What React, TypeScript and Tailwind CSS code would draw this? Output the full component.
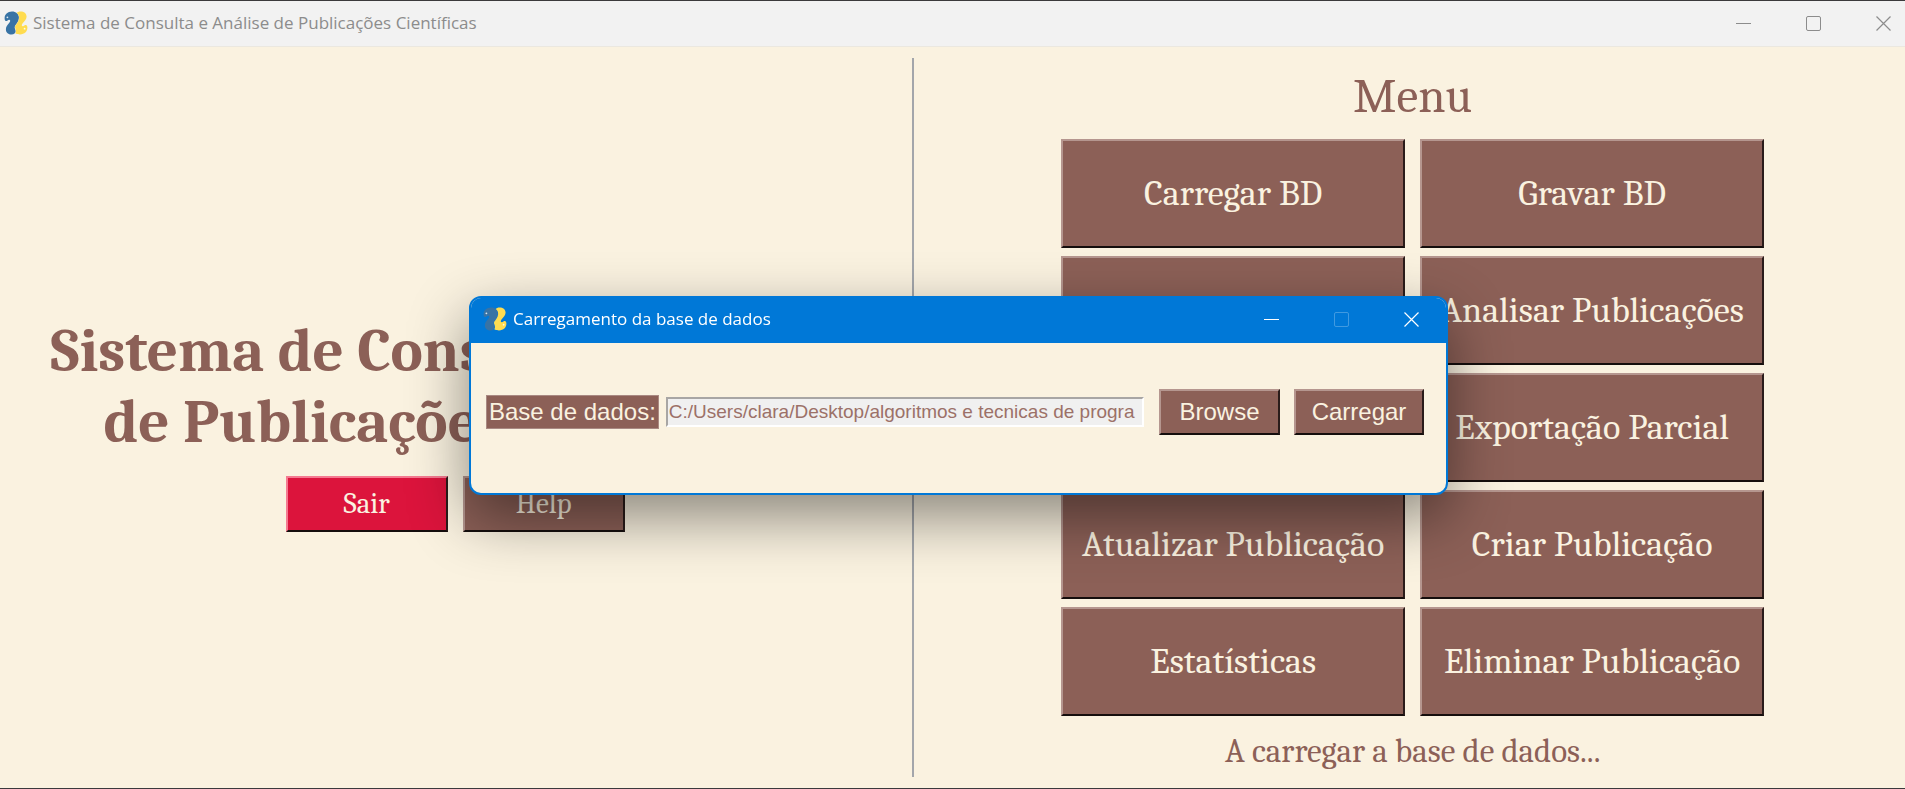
import type { ReactNode } from "react";

const serif = "font-['Cambria','Caladea','Liberation_Serif',serif]";
const bevel =
  "border-2 border-t-[#b5968f] border-l-[#b5968f] border-r-[#2a1c1a] border-b-[#150e0d] text-[#faf2e0]";

function SnakeIcon() {
  return (
    <svg className="size-6 shrink-0" viewBox="0 0 24 24" fill="none" aria-hidden="true">
      <path
        d="M8 .6C3.500.6.6 3.600.6 7.200.6 9.500 1.500 10.300 2.700 9.900 3.800 9.500 4.200 8.400 5.400 8.700 6.600 9 6.400 10.400 5.300 11.700 3.200 14 1.900 15.700 1.900 18.400 1.900 21.600 4.600 23.500 7.400 23.500 10.200 23.500 11.600 22.200 11.600 20.300 11.600 18 9.800 17 11.300 14.500 12.500 12.400 14.900 10.500 14.900 6.800 14.900 3 12 .6 8 .6Z"
        fill="#3873a5"
      />
      <path
        d="M16 23.400C20.500 23.400 23.400 20.400 23.400 16.800 23.400 14.500 22.500 13.700 21.300 14.100 20.200 14.500 19.800 15.600 18.600 15.300 17.400 15 17.600 13.600 18.700 12.300 20.800 10 22.600 8.300 22.600 5.600 22.600 2.400 19.800.5 16.800.5 14.600.5 13.400 1.200 12.700 2 14.400 3.300 15.400 5.200 15.100 7.400 14.700 10.500 12.600 12.500 11.400 14.600 10.200 16.800 12.300 18 12 20.500 11.900 21.200 11.600 21.800 11.300 22.200 12.600 23 14.300 23.400 16 23.400Z"
        fill="#ffdc50"
      />
      <circle cx="3.400" cy="6.300" r="0.900" fill="#dbe7f0" />
      <circle cx="20.600" cy="17.700" r="0.900" fill="#fffbe6" />
    </svg>
  );
}

function WindowControls({ disabledMax = false }: { disabledMax?: boolean }) {
  return (
    <div className="flex items-center gap-[54px]">
      <button aria-label="Minimizar">
        <svg className="size-4" viewBox="0 0 16 16" fill="none" stroke="currentColor">
          <path d="M0 8.500H15" />
        </svg>
      </button>
      <button aria-label="Maximizar" disabled={disabledMax} className="disabled:opacity-25">
        <svg className="size-4" viewBox="0 0 16 16" fill="none" stroke="currentColor">
          <rect x=".5" y="1.500" width="14" height="14" rx="1.500" />
        </svg>
      </button>
      <button aria-label="Fechar">
        <svg className="size-4" viewBox="0 0 16 16" fill="none" stroke="currentColor" strokeWidth="1.200">
          <path d="M.5 1.500l14 14M14.500 1.500l-14 14" />
        </svg>
      </button>
    </div>
  );
}

function BevelButton({ className, children }: { className: string; children: ReactNode }) {
  return <button className={`${bevel} ${className}`}>{children}</button>;
}

const menuItems = [
  "Carregar BD",
  "Gravar BD",
  "Consultar Publicação",
  "Analisar Publicações",
  "Exportação Total",
  "Exportação Parcial",
  "Atualizar Publicação",
  "Criar Publicação",
  "Estatísticas",
  "Eliminar Publicação",
];

export default function App() {
  return (
    <div className={`flex min-h-screen flex-col border-y border-[#3b3a3c] bg-[#faf2e0] text-[#8c6057] ${serif}`}>
      <header className="flex h-[46px] items-center justify-between border-b border-[#ebe8e0] bg-[#f2f2f2] pr-[13px] pb-0.5 pl-1 font-['Open_Sans','Noto_Sans',sans-serif] text-[17px] text-[#8c8c8c]">
        <div className="flex items-center gap-[5px]">
          <SnakeIcon />
          <span>Sistema de Consulta e Análise de Publicações Científicas</span>
        </div>
        <WindowControls />
      </header>

      <main className="flex grow py-[11px]">
        <section className="flex w-[48%] flex-col items-center justify-center gap-[18px] border-r-2 border-[#a3a6ab] pt-3 pr-0.5">
          <h1 className="text-center text-[61px] leading-[71px] font-bold whitespace-nowrap">
            Sistema de Consulta e Análise
            <br />
            de Publicações Científicas
          </h1>
          <div className="flex gap-[15px]">
            <BevelButton className="h-14 w-[162px] border-t-[#f47a90] border-l-[#f47a90] bg-[#dc143c] text-[29px] leading-8">
              Sair
            </BevelButton>
            <BevelButton className="h-14 w-[162px] bg-[#8c6057] text-[29px] leading-8">Help</BevelButton>
          </div>
        </section>

        <section className="flex grow flex-col items-center pl-1.5">
          <h2 className="pt-1.5 pb-[11px] text-[49px] leading-[64px]">Menu</h2>
          <div className="grid grid-cols-[344px_344px] gap-x-[15px] gap-y-2">
            {menuItems.map((item) => (
              <BevelButton key={item} className="h-[109px] bg-[#8c6057] text-[36px] leading-10 whitespace-nowrap">
                {item}
              </BevelButton>
            ))}
          </div>
          <p className="pt-[15px] text-[33px] leading-10">A carregar a base de dados...</p>
        </section>
      </main>

      <div className="fixed inset-0 flex items-center justify-center pt-0.5 pl-3">
        <div
          role="dialog"
          aria-label="Carregamento da base de dados"
          className="w-[979px] overflow-hidden rounded-xl border-2 border-[#0078d7] bg-[#faf2e0] font-['Liberation_Sans',Arial,sans-serif] shadow-[0_22px_60px_rgba(0,0,0,0.45)]"
        >
          <div className="flex h-[45px] items-center justify-between bg-[#0078d7] pr-[26px] pb-[3px] pl-3 font-['Open_Sans','Noto_Sans',sans-serif] text-[17px] text-white">
            <div className="flex items-center gap-1.5">
              <SnakeIcon />
              <span>Carregamento da base de dados</span>
            </div>
            <WindowControls disabledMax />
          </div>
          <form className="flex h-[150px] items-center pr-[22px] pb-3 pl-[15px]" onSubmit={(e) => e.preventDefault()}>
            <label
              htmlFor="path"
              className="border border-[#a98982] bg-[#8c6057] px-0.5 text-2xl leading-8 whitespace-nowrap text-[#faf2e0]"
            >
              Base de dados:
            </label>
            <input
              id="path"
              type="text"
              defaultValue="C:/Users/clara/Desktop/algoritmos e tecnicas de progra"
              className="ml-[7px] h-[30px] min-w-0 grow border-2 border-t-[#a8a6a4] border-r-white border-b-white border-l-[#a8a6a4] bg-[#f0f0f0] pl-px text-[19px] text-[#9c7168] outline-none"
            />
            <BevelButton className="ml-[15px] h-[46px] w-[121px] bg-[#8c6057] text-2xl">Browse</BevelButton>
            <BevelButton className="ml-[14px] h-[46px] w-[130px] bg-[#8c6057] text-2xl">Carregar</BevelButton>
          </form>
        </div>
      </div>
    </div>
  );
}
